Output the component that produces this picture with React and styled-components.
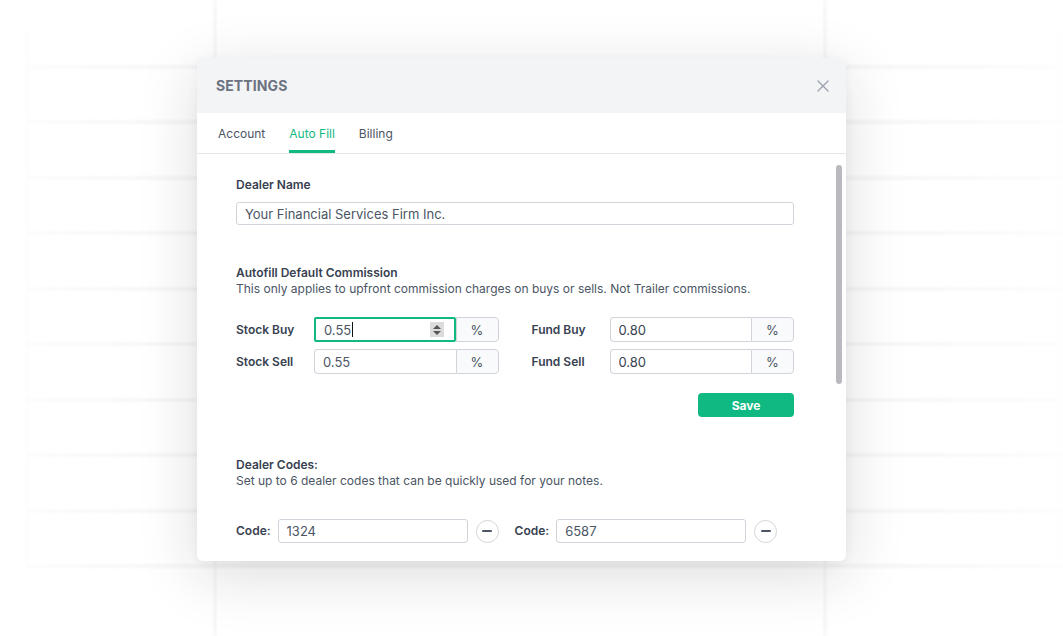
import React from 'react';
import styled, { createGlobalStyle } from 'styled-components';

const GlobalStyle = createGlobalStyle`
  body {
    margin: 0;
    font-family: Inter, "Noto Sans", Arial, sans-serif;
    background: #fff;
  }
`;

const green = '#10b981';

export const Page = styled.div`
  position: relative;
  width: 1063px;
  height: 636px;
  overflow: hidden;
  background: #fff;
`;

/* blurred table behind the modal */
export const Backdrop = styled.div`
  display: flex;
  flex-direction: column;
  height: 100%;
  filter: blur(1.6px);
`;

export const ColumnStrip = styled.div`
  height: ${(p) => (p.$grow ? 'auto' : '32px')};
  flex: ${(p) => (p.$grow ? 1 : '0 0 auto')};
  margin-left: 214px;
  width: 612px;
  box-sizing: border-box;
  border-left: 2px solid #f1f1f3;
  border-right: 2px solid #f1f1f3;
`;

export const Table = styled.div`
  margin-left: 26px;
  width: 1036px;
  box-sizing: border-box;
  border-left: 2px solid #f7f7f8;
  border-right: 2px solid #f7f7f8;
  -webkit-mask-image: linear-gradient(to right, rgba(0,0,0,0.35), #000 12%, #000 85%, rgba(0,0,0,0.3));
  mask-image: linear-gradient(to right, rgba(0,0,0,0.35), #000 12%, #000 85%, rgba(0,0,0,0.3));
`;

export const TableRow = styled.div`
  display: grid;
  grid-template-columns: 186px 612px 1fr;
  height: ${(p) => p.$h}px;
  border-bottom: 2px solid ${(p) => (p.$last ? 'transparent' : '#efeff1')};
`;

export const TableCell = styled.div`
  ${(p) =>
    p.$mid &&
    `
    border-left: 2px solid #f1f1f3;
    border-right: 2px solid #f1f1f3;
  `}
`;

export const Modal = styled.div`
  position: absolute;
  left: 197px;
  top: 58px;
  width: 649px;
  height: 503px;
  background: #fff;
  border-radius: 6px;
  overflow: hidden;
  display: flex;
  flex-direction: column;
  box-shadow: 0 14px 60px rgba(30, 30, 40, 0.15), 0 2px 10px rgba(30, 30, 40, 0.05);
`;

export const ModalHeader = styled.div`
  height: 55px;
  flex-shrink: 0;
  background: #f3f4f6;
  display: flex;
  align-items: center;
  justify-content: space-between;
  padding: 0 16px 0 19px;
`;

export const ModalTitle = styled.h2`
  margin: 0;
  font-size: 14px;
  font-weight: 700;
  color: #6b7280;
  letter-spacing: 0.1px;
`;

export const CloseButton = styled.button`
  border: 0;
  background: none;
  padding: 0;
  width: 14px;
  height: 14px;
  display: flex;
  align-items: center;
  justify-content: center;
  cursor: pointer;
`;

export const Tabs = styled.div`
  height: 40px;
  flex-shrink: 0;
  display: flex;
  gap: 24px;
  padding-left: 21px;
  border-bottom: 1px solid #e5e7eb;
`;

export const Tab = styled.div`
  display: flex;
  align-items: center;
  font-size: 12px;
  color: ${(p) => (p.$active ? green : '#4b5563')};
  border-bottom: 3px solid ${(p) => (p.$active ? green : 'transparent')};
  padding-top: 3px;
`;

export const Body = styled.div`
  position: relative;
  flex: 1;
  overflow: hidden;
  padding: 23px 52px 0 39px;
`;

export const ScrollThumb = styled.div`
  position: absolute;
  right: 4px;
  top: 11px;
  width: 6px;
  height: 219px;
  border-radius: 3px;
  background: #b9b9bf;
`;

export const Label = styled.div`
  font-size: 12px;
  line-height: 16px;
  font-weight: 600;
  color: #374151;
  white-space: nowrap;
  padding-left: ${(p) => p.$indent || 0}px;
`;

export const Hint = styled.div`
  font-size: 12px;
  line-height: 16px;
  color: #4b5563;
`;

export const Section = styled.section`
  margin-top: ${(p) => p.$top || 0}px;
`;

export const TextInput = styled.input`
  display: block;
  box-sizing: border-box;
  width: ${(p) => p.$w || '100%'};
  height: ${(p) => p.$h || 24}px;
  margin-top: ${(p) => p.$top || 0}px;
  border: 1px solid #d1d5db;
  border-radius: 3px;
  padding: 0 8px;
  font-family: inherit;
  font-size: 13px;
  color: #4b5563;
  background: #fff;
  outline: none;
`;

export const RateGrid = styled.div`
  margin-top: 20px;
  display: grid;
  grid-template-columns: 78px minmax(0, 1fr) 111px minmax(0, 1fr);
  row-gap: 7px;
  align-items: center;
`;

export const Group = styled.div`
  display: flex;
  height: 25px;
  min-width: 0;
`;

export const GroupInput = styled.input`
  flex: 1;
  min-width: 0;
  width: 0;
  box-sizing: border-box;
  border: 1px solid #d1d5db;
  border-right: 0;
  border-radius: 4px 0 0 4px;
  padding: 0 8px;
  font-family: inherit;
  font-size: 13px;
  color: ${(p) => p.$tone || '#4b5563'};
  background: #fff;
  outline: none;
`;

export const FocusedField = styled.div`
  flex: 1;
  min-width: 0;
  display: flex;
  align-items: center;
  box-sizing: border-box;
  border: 2px solid ${green};
  border-radius: 2px;
  padding: 0 10px 0 8px;
  font-size: 13px;
  color: #4b5563;
`;

export const Caret = styled.span`
  display: inline-block;
  width: 1px;
  height: 15px;
  background: #111;
  margin-left: 1px;
`;

export const Stepper = styled.span`
  margin-left: auto;
  width: 14px;
  height: 15px;
  background: #dcdcdc;
  display: flex;
  flex-direction: column;
  align-items: center;
  justify-content: center;
  gap: 2px;
`;

export const Tri = styled.span`
  width: 0;
  height: 0;
  border-left: 4px solid transparent;
  border-right: 4px solid transparent;
  ${(p) => (p.$down ? 'border-top: 4px solid #555;' : 'border-bottom: 4px solid #555;')}
`;

export const Addon = styled.span`
  width: 43px;
  flex-shrink: 0;
  box-sizing: border-box;
  display: flex;
  align-items: center;
  justify-content: center;
  border: 1px solid #d1d5db;
  border-radius: 0 4px 4px 0;
  background: #f9fafb;
  font-size: 13px;
  color: #4b5563;
`;

export const Actions = styled.div`
  display: flex;
  justify-content: flex-end;
  margin-top: 19px;
`;

export const SaveButton = styled.button`
  width: 96px;
  height: 24px;
  border: 0;
  border-radius: 4px;
  background: ${green};
  color: #fff;
  font-family: inherit;
  font-size: 12px;
  font-weight: 700;
  cursor: pointer;
`;

export const CodeRow = styled.div`
  display: flex;
  align-items: center;
  margin-top: 30px;
`;

export const CodeItem = styled.div`
  display: flex;
  align-items: center;
  gap: 7px;
  margin-right: 16px;
`;

export const RemoveButton = styled.button`
  width: 23px;
  height: 23px;
  margin-left: 1px;
  border: 1px solid #d1d5db;
  border-radius: 50%;
  background: #fff;
  display: flex;
  align-items: center;
  justify-content: center;
  padding: 0;
  cursor: pointer;

  &::before {
    content: '';
    width: 10px;
    height: 2px;
    border-radius: 1px;
    background: #4b5563;
  }
`;

const rows = [34, 53, 54, 53, 54, 53, 54, 53, 54, 53];

const CloseIcon = () => (
  <svg width="12" height="12" viewBox="0 0 12 12" fill="none">
    <path d="M1 1l10 10M11 1L1 11" stroke="#9ca3af" strokeWidth="1.4" strokeLinecap="round" />
  </svg>
);

const RateInput = ({ value, focused, tone }) => (
  <Group>
    {focused ? (
      <FocusedField>
        {value}
        <Caret />
        <Stepper>
          <Tri />
          <Tri $down />
        </Stepper>
      </FocusedField>
    ) : (
      <GroupInput readOnly value={value} $tone={tone} />
    )}
    <Addon>%</Addon>
  </Group>
);

export default function App() {
  return (
    <Page>
      <GlobalStyle />
      <Backdrop>
        <ColumnStrip />
        <Table>
          {rows.map((h, i) => (
            <TableRow key={i} $h={h}>
              <TableCell />
              <TableCell $mid />
              <TableCell />
            </TableRow>
          ))}
        </Table>
        <ColumnStrip $grow />
      </Backdrop>

      <Modal>
        <ModalHeader>
          <ModalTitle>SETTINGS</ModalTitle>
          <CloseButton aria-label="Close">
            <CloseIcon />
          </CloseButton>
        </ModalHeader>
        <Tabs>
          <Tab>Account</Tab>
          <Tab $active>Auto Fill</Tab>
          <Tab>Billing</Tab>
        </Tabs>
        <Body>
          <ScrollThumb />
          <Section>
            <Label>Dealer Name</Label>
            <TextInput readOnly value="Your Financial Services Firm Inc." $top={9} $h={23} />
          </Section>

          <Section $top={40}>
            <Label>Autofill Default Commission</Label>
            <Hint>This only applies to upfront commission charges on buys or sells. Not Trailer commissions.</Hint>
            <RateGrid>
              <Label>Stock Buy</Label>
              <RateInput value="0.55" focused />
              <Label $indent={33}>Fund Buy</Label>
              <RateInput value="0.80" tone="#374151" />
              <Label>Stock Sell</Label>
              <RateInput value="0.55" />
              <Label $indent={33}>Fund Sell</Label>
              <RateInput value="0.80" tone="#374151" />
            </RateGrid>
            <Actions>
              <SaveButton>Save</SaveButton>
            </Actions>
          </Section>

          <Section $top={40}>
            <Label>Dealer Codes:</Label>
            <Hint>Set up to 6 dealer codes that can be quickly used for your notes.</Hint>
            <CodeRow>
              {['1324', '6587'].map((code) => (
                <CodeItem key={code}>
                  <Label>Code:</Label>
                  <TextInput readOnly value={code} $w="190px" />
                  <RemoveButton aria-label="Remove code" />
                </CodeItem>
              ))}
            </CodeRow>
          </Section>
        </Body>
      </Modal>
    </Page>
  );
}
